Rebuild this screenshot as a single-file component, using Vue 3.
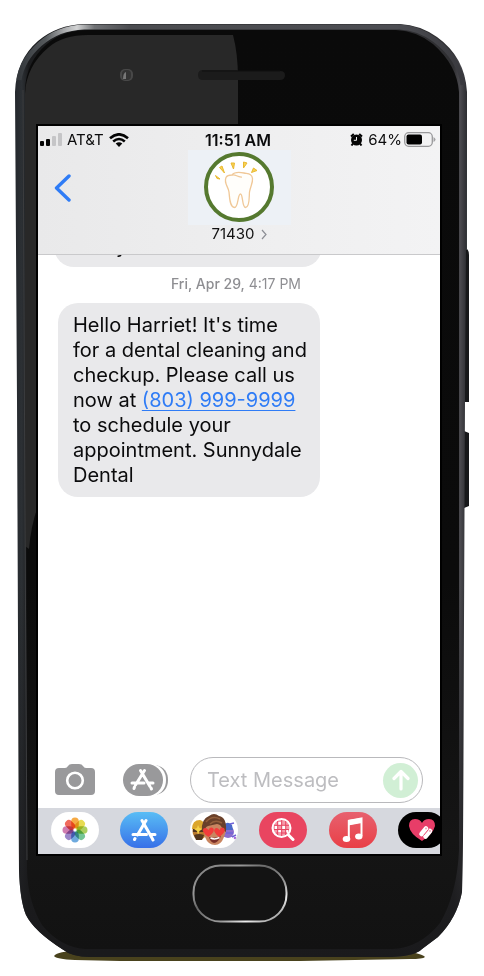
<script setup>
import { ref } from 'vue'

const draft = ref('')
const petals = [
  { color: '#f59b24', angle: 0 },
  { color: '#e3d532', angle: 45 },
  { color: '#9cc643', angle: 90 },
  { color: '#5cbb83', angle: 135 },
  { color: '#549bd8', angle: 180 },
  { color: '#8a72c0', angle: 225 },
  { color: '#c765a2', angle: 270 },
  { color: '#ee5140', angle: 315 },
]
</script>

<template>
  <main class="phone">
    <svg class="shell" viewBox="0 0 484 976" preserveAspectRatio="none" aria-hidden="true">
      <defs>
        <linearGradient id="rim" x1="0" x2="1" y1="0" y2="0">
          <stop offset="0" stop-color="#24282d" />
          <stop offset=".015" stop-color="#2c3034" />
          <stop offset=".03" stop-color="#1b1c1e" />
          <stop offset=".97" stop-color="#303033" />
          <stop offset=".985" stop-color="#4b4a4f" />
          <stop offset="1" stop-color="#2b2c30" />
        </linearGradient>
        <linearGradient id="rimShade" x1="0" x2="0" y1="0" y2="1">
          <stop offset=".6" stop-color="#1a1a1c" stop-opacity="0" />
          <stop offset="1" stop-color="#1a1a1c" stop-opacity="1" />
        </linearGradient>
        <linearGradient id="topEdge" x1="0" x2="1" y1="0" y2="0">
          <stop offset="0" stop-color="#34383c" />
          <stop offset=".06" stop-color="#55595c" />
          <stop offset=".1" stop-color="#a5a7a9" />
          <stop offset=".13" stop-color="#d2d3d4" />
          <stop offset=".17" stop-color="#707275" />
          <stop offset=".25" stop-color="#4b4c50" />
          <stop offset=".85" stop-color="#4c4d52" />
          <stop offset="1" stop-color="#39393e" />
        </linearGradient>
        <linearGradient id="face" x1="0" x2="0" y1="0" y2="1">
          <stop offset="0" stop-color="#0a0a0a" />
          <stop offset=".6" stop-color="#0b0b0b" />
          <stop offset=".88" stop-color="#151515" />
          <stop offset="1" stop-color="#121212" />
        </linearGradient>
      </defs>
      <path d="M54 956Q58 951 78 951H405Q423 954 425 957Q423 959 410 959L300 961H120L75 960Q56 959 54 956Z" fill="#49421d" />
      <path d="M464 248Q469 248 469 255V402H464ZM464 431L469 433V506L464 508Z" fill="#17181a" />
      <path d="M464 84L467 95V250H464Z" fill="#34383b" />
      <path d="M15 92Q16 60 38 41Q57 25 84 24H400Q420 25 437 37Q465 57 467 92L465 400L463 840L462 892Q457 918 438 937L422 949Q414 957 385 957H90Q72 957 62 949Q34 931 26 915Q20 901 19 870L17 400Z" fill="url(#rim)" />
      <path d="M15 92Q16 60 38 41Q57 25 84 24H400Q420 25 437 37Q465 57 467 92L465 400L463 840L462 892Q457 918 438 937L422 949Q414 957 385 957H90Q72 957 62 949Q34 931 26 915Q20 901 19 870L17 400Z" fill="url(#rimShade)" />
      <path d="M19 80Q22 60 40 44Q58 28 84 27H400Q419 28 435 40Q460 59 463 85" fill="none" stroke="url(#topEdge)" stroke-width="5" />
      <path d="M25 90Q26 62 47 44Q63 30 88 30H396Q417 31 433 44Q457 65 459 92V850Q457 894 440 923Q420 948 392 949H85Q60 947 42 925Q28 902 27 870Z" fill="url(#face)" />
      <path d="M25 94Q26 66 49 47Q63 35 88 35H233Q238 54 238 78V200H38V506Q31 525 29 549L25 546Z" fill="#282828" />
      <path d="M23 90L25 520L27 860" fill="none" stroke="#3c3d3f" stroke-width="1" />
      <path d="M441.500 130V400" fill="none" stroke="#173b18" stroke-width="1" />
      <rect x="120" y="69" width="13" height="12" rx="5" fill="#484848" />
      <rect x="122" y="70" width="9" height="10" rx="4" fill="#333" />
      <path d="M126 72v7h-3q0-6 3-7Z" fill="#777" />
      <path d="M203 70H238V80H203Q198 80 198 75Q198 70 203 70Z" fill="#1b1b1b" />
      <path d="M238 71H280Q285 71 285 75Q285 80 280 80H238Z" fill="#1b1b1b" />
      <path d="M202 71H280" stroke="#101010" stroke-width="1" />
    </svg>

    <section class="screen">
      <header class="top">
        <div class="status">
          <div class="status-left">
            <svg width="22" height="13" viewBox="0 0 22 13" aria-hidden="true">
              <rect x="0" y="8" width="4" height="5" rx="1" fill="#050505" />
              <rect x="6" y="6" width="4" height="7" rx="1" fill="#050505" />
              <rect x="12" y="3" width="4" height="10" rx="1" fill="#c5c5c7" />
              <rect x="18" y="0" width="4" height="13" rx="1" fill="#c5c5c7" />
            </svg>
            <span>AT&amp;T</span>
            <svg width="20" height="14" viewBox="0 0 20 14" aria-hidden="true">
              <g fill="none" stroke="#050505" stroke-width="2.600">
                <path d="M1 5.200Q10-2.600 19 5.200" />
                <path d="M4.200 8.500Q10 3.500 15.800 8.500" />
              </g>
              <path d="M6.700 10.600Q10 8 13.300 10.600L10 14Z" fill="#050505" />
            </svg>
          </div>
          <time class="clock">11:51 AM</time>
          <div class="status-right">
            <svg width="13" height="13" viewBox="0 0 13 13" aria-hidden="true">
              <path d="M1 3.500L3.800 1M9.200 1L12 3.500M3 10.500L1.500 12.500M10 10.500l1.500 2" stroke="#050505" stroke-width="2" />
              <circle cx="6.500" cy="7" r="5.500" fill="#050505" />
              <path d="M6.500 4V7.300H3.800" fill="none" stroke="#eee" stroke-width="1" />
            </svg>
            <span>64%</span>
            <svg class="battery" width="32" height="15" viewBox="0 0 32 15" aria-hidden="true">
              <rect x=".7" y=".7" width="27.600" height="13.600" rx="4" fill="none" stroke="#98989a" stroke-width="1.300" />
              <rect x="2.500" y="2.500" width="15.500" height="10" rx="2" fill="#000" />
              <path d="M29.500 5Q31.500 6 31.500 7.500T29.500 10Z" fill="#a2a2a4" />
            </svg>
          </div>
        </div>
        <div class="nav">
          <button class="back" type="button" aria-label="Back">
            <svg width="17" height="28" viewBox="0 0 17 28" aria-hidden="true">
              <path d="M15 2L2.500 14L15 26" fill="none" stroke="#2f7cf6" stroke-width="3.400" stroke-linecap="round" stroke-linejoin="round" />
            </svg>
          </button>
          <div class="contact">
            <div class="avatar">
              <svg width="70" height="70" viewBox="0 0 70 70" aria-hidden="true">
                <circle cx="35" cy="35" r="33" fill="#fff" stroke="#55792f" stroke-width="4" />
                <path d="M22 25.500C19.500 31 24.500 35 25 40C25.500 46 26 55.500 30.500 55.500C34.500 55.500 33.500 42 36.500 42C39 42 38 55.500 41.500 55.500C46 55.500 45 44 45.500 40C46.500 34 49 31 48.500 26.500C48 21.500 44 22 40 21C35 20 30 20.500 28 23C25 23 23 23.500 22 25.500Z" fill="#fffefb" stroke="#f0c898" stroke-width="1.300" />
                <path d="M28 23C32 22 33 25.500 38 25" fill="none" stroke="#f0c898" stroke-width="1.200" />
                <path d="M11.500 23.500L16 27L13 26.500ZM15.500 15.500L18 14L20.500 21ZM27 11H30.500L29.500 17ZM39.500 10L43 11L39.500 16ZM47.500 20.500L49.500 16L53 18.500Z" fill="#f8d254" stroke="#e9b932" stroke-width="1" stroke-linejoin="round" />
              </svg>
            </div>
            <a class="number" href="#details">71430
              <svg width="6" height="11" viewBox="0 0 6 11" aria-hidden="true"><path d="M1 1L5 5.500L1 10" fill="none" stroke="#8b8d94" stroke-width="1.200" /></svg>
            </a>
          </div>
        </div>
      </header>

      <div class="thread">
        <div class="earlier"><p class="bubble tail">y</p></div>
        <p class="stamp"><b>Fri, Apr 29,</b> 4:17 PM</p>
        <p class="bubble message">Hello Harriet! It's time for a dental cleaning and checkup. Please call us now at <a href="tel:8039999999">(803) 999-9999</a> to schedule your appointment. Sunnydale Dental</p>
      </div>

      <form class="composer" @submit.prevent="draft = ''">
        <button class="tool" type="button" aria-label="Camera">
          <svg width="40" height="32" viewBox="0 0 40 32" aria-hidden="true">
            <path d="M4 4H10Q12 4 13 2Q14 0 17 0H24Q27 0 28 2Q29 4 31 4H36Q40 4 40 8V27Q40 31 36 31H4Q0 31 0 27V8Q0 4 4 4Z" fill="#99999b" />
            <circle cx="20" cy="16.500" r="7.800" fill="none" stroke="#fff" stroke-width="2.600" />
          </svg>
        </button>
        <button class="tool" type="button" aria-label="Apps">
          <svg width="45" height="34" viewBox="0 0 45 34" aria-hidden="true">
            <path d="M33 2Q45 5 45 17T33 32Z" fill="#99999b" />
            <path d="M31 1Q43 5 43 17T31 33Z" fill="#fff" />
            <rect x="0" y="1" width="40" height="32" rx="16" fill="#99999b" />
            <g fill="none" stroke="#fff" stroke-width="3" stroke-linecap="round">
              <path d="M21.500 7.500L12.500 22M17.500 7.500L27 23.500M9 20H21M26 20H30M11.500 24L11 25.500M28 25L28.500 26" />
            </g>
          </svg>
        </button>
        <div class="field">
          <input v-model="draft" type="text" aria-label="Text Message" placeholder="Text Message" />
          <button class="send" type="submit" aria-label="Send">
            <svg width="18" height="22" viewBox="0 0 18 22" aria-hidden="true">
              <path d="M9 20V3M2 9.500L9 2.500L16 9.500" fill="none" stroke="#fff" stroke-width="3.200" stroke-linecap="round" stroke-linejoin="round" />
            </svg>
          </button>
        </div>
      </form>

      <nav class="apps" aria-label="Message apps">
        <button class="app white" type="button" aria-label="Photos">
          <svg width="26" height="26" viewBox="-13 -13 26 26" aria-hidden="true">
            <rect v-for="p in petals" :key="p.angle" class="petal" x="-3.800" y="-12.500" width="7.600" height="11" rx="3.800" :fill="p.color" :transform="`rotate(${p.angle})`" />
          </svg>
        </button>
        <button class="app blue" type="button" aria-label="App Store">
          <svg width="26" height="24" viewBox="0 0 26 24" aria-hidden="true">
            <g fill="none" stroke="#fff" stroke-width="3" stroke-linecap="round">
              <path d="M15 2.500L6.500 17M11 2.500L21 20M2 16.500H15.500M20 16.500H24M4 20.500L3.500 21.500M21.500 21L22 22" />
            </g>
          </svg>
        </button>
        <button class="app white" type="button" aria-label="Memoji">
          <svg width="48" height="36" viewBox="0 0 48 36" aria-hidden="true">
            <ellipse cx="9.500" cy="19" rx="7" ry="9" fill="#ba7a2e" />
            <path d="M2 17Q2 8 10 8Q15 9 15 17Z" fill="#dba62d" />
            <path d="M3 17H14V20H3Z" fill="#51351e" />
            <path d="M8 13l1.500 3 3 1-3 2L8 23l-1-4-3-2 3-1Z" fill="#f6d248" />
            <path d="M4 23Q9 21 14 23L12 28H6Z" fill="#54371f" />
            <circle cx="38" cy="20" r="6" fill="#8d6ccc" />
            <path d="M33 14Q37 8 42 13L43 18H34Z" fill="#4868c8" />
            <path d="M36 21H43M42 25L46 23M40 12L44 11" stroke="#6f62d6" stroke-width="1.500" />
            <circle cx="45" cy="26" r="1.300" fill="#a96bd8" />
            <path d="M13 17Q13 5 25 5Q36 7 36 19L34 25Q31 33 25 33Q18 33 15 25Z" fill="#c98560" />
            <path d="M12 19Q11 7 19 4Q24 0 29 4Q37 5 36 20L33 18Q31 12 27 12L18 14Q15 15 14 20Z" fill="#69402a" />
            <path d="M16 10Q22 3 30 7M20 12Q25 7 32 11" fill="none" stroke="#925f3c" stroke-width="1.500" />
            <path d="M19 25Q25 27 31 24Q28 31 24 31Q20 30 19 25Z" fill="#792f28" />
            <path d="M20.500 26Q25 28 29.500 25.500" stroke="#fff" stroke-width="1.500" fill="none" />
            <path d="M18.500 25Q11 20 13.500 16.500Q16 15 18.500 18Q20 14.500 23 16Q26 19 18.500 25ZM29.500 25Q22 20 25 16.500Q27.500 15 29.500 18Q31 14.500 34 16Q37 19 29.500 25Z" fill="#f23c3a" />
          </svg>
        </button>
        <button class="app rose" type="button" aria-label="Image search">
          <svg width="24" height="24" viewBox="0 0 24 24" aria-hidden="true">
            <circle cx="10.500" cy="10" r="9" fill="#f59aaa" stroke="#fff" stroke-width="2" />
            <path d="M7 4H10V7H7ZM11 7H15V11H11ZM4 8H7V11H4ZM7 12H10V16H7ZM15 12H17V15H15Z" fill="#fff" />
            <path d="M3 7.300H18M3 11.500H18M6.700 3V17M10.700 2V18M14.700 3V17M5 15H16" stroke="#e64562" stroke-width="1" />
            <path d="M17.500 17L22 21.500" stroke="#fff" stroke-width="3" stroke-linecap="round" />
          </svg>
        </button>
        <button class="app music" type="button" aria-label="Music">
          <svg width="22" height="26" viewBox="0 0 22 26" aria-hidden="true">
            <path d="M6 4L19.500 1.500V19M6.800 3.500V22M7 7L19 4.500" fill="none" stroke="#fff" stroke-width="2" />
            <path d="M6 3L20 1V6L6 8.500Z" fill="#fff" />
            <ellipse cx="4.500" cy="22" rx="3.800" ry="3" fill="#fff" />
            <ellipse cx="16.800" cy="19.500" rx="3.700" ry="3" fill="#fff" />
          </svg>
        </button>
        <button class="app black" type="button" aria-label="Digital Touch">
          <svg width="26" height="24" viewBox="0 0 26 24" aria-hidden="true">
            <path d="M13 23Q1 16 0 8Q0 1 6 1Q11 1 13 5Q15 1 20 1Q26 1 26 8Q24 16 13 23Z" fill="#e83d68" />
            <path d="M12.500 16L17 10.500M16.500 18.500L21 13" stroke="#fff" stroke-width="4.600" stroke-linecap="round" />
            <path d="M14.500 17.500L19.500 11.500" stroke="#e83d68" stroke-width="1" />
            <circle cx="17" cy="10.500" r="1" fill="#f4a5b8" /><circle cx="21" cy="13" r="1" fill="#f4a5b8" />
          </svg>
        </button>
      </nav>
    </section>

    <button class="home" type="button" aria-label="Home">
      <svg width="96" height="59" viewBox="0 0 96 59" aria-hidden="true">
        <defs>
          <linearGradient id="ring" x1="0" x2="1" y1="0" y2="1">
            <stop offset="0" stop-color="#7c7c7c" />
            <stop offset=".25" stop-color="#989898" />
            <stop offset=".4" stop-color="#666" />
            <stop offset=".65" stop-color="#9b9b9b" />
            <stop offset=".78" stop-color="#eee" />
            <stop offset="1" stop-color="#777" />
          </linearGradient>
        </defs>
        <rect x="1.500" y="1.500" width="93" height="56" rx="27" fill="#131313" stroke="url(#ring)" stroke-width="2" />
      </svg>
    </button>
  </main>
</template>

<style>
body {
  background: #fff;
}
</style>

<style scoped>
* {
  box-sizing: border-box;
}
.phone {
  position: relative;
  display: flex;
  flex-direction: column;
  min-height: 100vh;
  padding: 124px 42px 53px 36px;
  font-family: Inter, "Liberation Sans", sans-serif;
  color: #0b0b0c;
}
.shell {
  position: absolute;
  inset: 0;
  width: 100%;
  height: 100%;
}
svg {
  display: block;
  flex: none;
}
button {
  display: flex;
  align-items: center;
  justify-content: center;
  margin: 0;
  padding: 0;
  border: 0;
  background: none;
}
p {
  margin: 0;
}
.screen {
  position: relative;
  display: flex;
  flex: 1;
  flex-direction: column;
  overflow: hidden;
  border: 2px solid #000;
  background: #fff;
}
.top {
  height: 129px;
  border-bottom: 1px solid #c9c9cb;
  background: linear-gradient(90deg, #e9e9ea, #f3f3f4);
}
.status {
  display: grid;
  grid-template-columns: 1fr auto 1fr;
  align-items: center;
  height: 24px;
  padding: 3px 4px 0 2px;
  font-size: 15px;
  line-height: 20px;
}
.status-left,
.status-right {
  display: flex;
  align-items: center;
  gap: 5px;
}
.status-right {
  justify-content: flex-end;
}
.battery {
  margin-left: -3px;
}
.clock {
  font-size: 16px;
  font-weight: 600;
}
.nav {
  display: grid;
  grid-template-columns: 1fr auto 1fr;
  align-items: start;
}
.back {
  width: 32px;
  height: 44px;
  margin: 16px 0 0 8px;
}
.contact {
  display: flex;
  flex-direction: column;
  align-items: center;
}
.avatar {
  display: flex;
  justify-content: center;
  width: 103px;
  padding: 2px 0 3px;
  background: #edf1f6;
}
.number {
  display: flex;
  align-items: center;
  gap: 6px;
  color: #111;
  font-size: 15px;
  line-height: 18px;
  text-decoration: none;
}
.thread {
  display: flex;
  flex: 1;
  flex-direction: column;
  align-items: flex-start;
}
.earlier {
  display: flex;
  align-items: flex-end;
  height: 12px;
  margin-left: 16px;
  overflow: hidden;
}
.bubble {
  border-radius: 20px;
  background: #e9e9eb;
  font-size: 20px;
  line-height: 25px;
}
.tail {
  width: 268px;
  padding: 8px 62px;
}
.stamp {
  align-self: center;
  margin: 7px 6px 9px 0;
  color: #8e8e92;
  font-size: 14px;
  line-height: 20px;
}
.stamp b {
  font-weight: 500;
}
.message {
  width: 262px;
  margin-left: 20px;
  padding: 10px 12px 9px 15px;
}
.message a {
  color: #2f7cf6;
  text-decoration-thickness: 1px;
  text-underline-offset: 3px;
}
.composer {
  display: flex;
  align-items: center;
  padding: 0 17px 5px;
}
.tool + .tool {
  margin-left: 28px;
}
.field {
  display: flex;
  flex: 1;
  align-items: center;
  min-width: 0;
  height: 46px;
  margin-left: 22px;
  padding: 0 4px 0 16px;
  border: 1px solid #b9b9bc;
  border-radius: 23px;
}
.field input {
  flex: 1;
  min-width: 0;
  padding: 0;
  border: 0;
  outline: 0;
  background: transparent;
  color: #111;
  font: inherit;
  font-size: 20px;
}
.field input::placeholder {
  color: #bdbdc0;
  opacity: 1;
}
.send {
  width: 35px;
  height: 35px;
  border-radius: 50%;
  background: #d1efd5;
}
.apps {
  display: flex;
  align-items: center;
  justify-content: space-between;
  height: 46px;
  margin-right: -6px;
  padding: 0 0 2px 13px;
  background: #d6d8de;
}
.app {
  width: 48px;
  height: 36px;
  overflow: hidden;
  border-radius: 18px;
}
.white {
  background: #fff;
}
.blue {
  background: linear-gradient(#59bdf5, #3770e8);
}
.rose {
  background: #e94560;
}
.music {
  background: linear-gradient(#e7616f, #e93f46);
}
.black {
  background: #000;
}
.petal {
  opacity: 0.85;
  mix-blend-mode: multiply;
}
.home {
  position: relative;
  align-self: center;
  margin: 8px 0 0 1px;
}
</style>
